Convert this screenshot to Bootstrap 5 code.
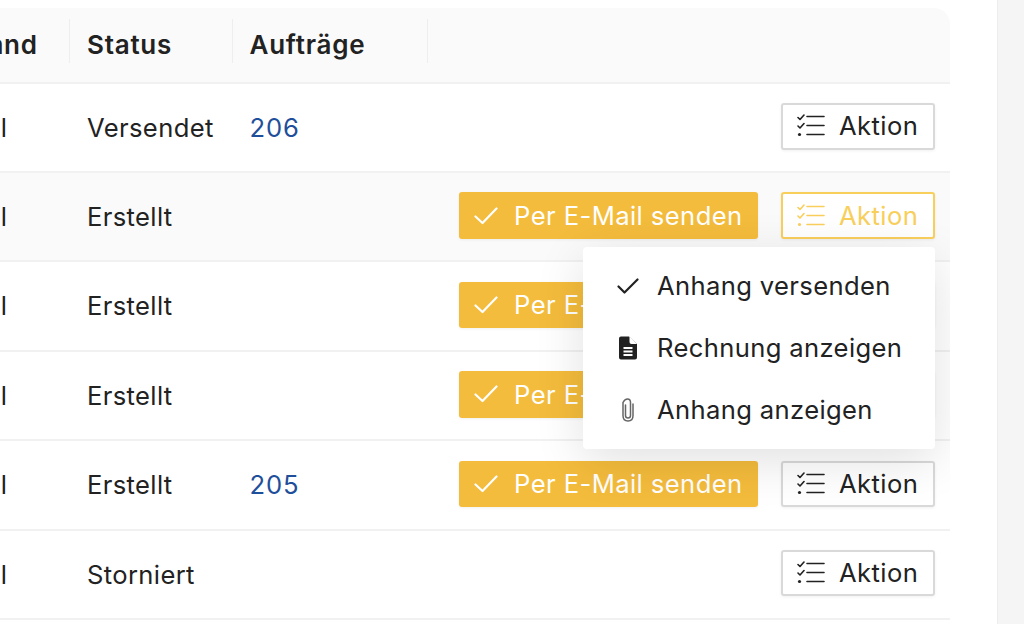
<!doctype html>
<html lang="de">
<head>
<meta charset="utf-8">
<title>Aufträge</title>
<link href="https://cdn.jsdelivr.net/npm/bootstrap@5.3.0/dist/css/bootstrap.min.css" rel="stylesheet">
<style>
html,body{height:100%;overflow:hidden;background:#fff;}
body{font-family:Inter,"Liberation Sans",sans-serif;font-size:25.6px;letter-spacing:.36px;color:#222;}
.shell{height:624px;}
.content-area{width:997px;flex:none;padding-top:8px;}
.side-area{flex:1;background:#f5f5f5;border-left:1px solid #eee;}
.table-clip{width:950px;overflow:hidden;border-top-right-radius:16px;}
.order-table{width:1050px;margin:0 0 0 -100px;table-layout:fixed;font-size:25.6px;color:#222;border-collapse:separate;border-spacing:0;}
.order-table col:nth-child(1){width:170px}
.order-table col:nth-child(2){width:163px}
.order-table col:nth-child(3){width:195px}
.order-table th{height:75.6px;padding:0 17px;background:#fafafa;font-size:26px;letter-spacing:.75px;font-weight:600;border-bottom:2px solid #f1f1f1;position:relative;color:#222;vertical-align:middle;box-shadow:none;}
.order-table th.sep::after{content:"";position:absolute;right:0;top:11px;height:44px;width:1px;background:#eee;}
.order-table th:first-child,.order-table td:first-child{padding-left:28px;white-space:nowrap;}
.order-table th:nth-child(3),.order-table td:nth-child(3){padding-left:16.5px;}
.order-table td{height:89.4px;padding:1px 17px 0;border-bottom:2px solid #f1f1f1;vertical-align:middle;background:transparent;box-shadow:none;color:#222;}
.order-table tr.hot td{background:#fafafa;}
.order-table td.acts{padding:0 15px 2px 0;}
.order-no{color:#1f4f9b;text-decoration:none;letter-spacing:.9px;}
.mail-btn,.act-btn{height:46.5px;font-size:25.6px;letter-spacing:.42px;line-height:1;border-radius:3px;display:inline-flex;align-items:center;padding:0;box-shadow:0 1px 3px rgba(0,0,0,.06);}
.mail-btn{width:299px;background:#f4bc3c;border:0;color:#fff;padding-left:15px;gap:16px;}
.mail-btn:hover{background:#f4bc3c;color:#fff;}
.act-btn{width:154px;background:#fff;border:2px solid #d9d9d9;color:#222;padding-left:14px;gap:14px;}
.act-btn.on{border-color:#f9cf5c;color:#f9cf5c;}
.act-btn svg{width:28px;height:24px;flex:none;}
.mail-btn svg{width:24px;height:18px;flex:none;}
.act-row{gap:23px;}
.act-wrap{position:relative;}
.act-menu{display:block;position:absolute;top:55px;right:0;width:352px;height:202px;margin:0;padding:8px 0;border:0;border-radius:4px;background:#fff;box-shadow:0 12px 50px rgba(0,0,0,.12);z-index:5;font-size:25.6px;letter-spacing:.36px;}
.act-menu .dropdown-item{height:62px;padding:0 0 0 34px;display:flex;align-items:center;color:#222;gap:0;}
.menu-ico{width:40px;flex:none;display:flex;align-items:center;}
</style>
</head>
<body>
<svg width="0" height="0" class="d-block position-absolute">
<defs>
<symbol id="i-list" viewBox="0 0 28 24"><g fill="none" stroke="currentColor" stroke-width="1.6" stroke-linecap="round" stroke-linejoin="round"><path d="M1 3.5 3 5.5 7 1M1 12 3 14 7 9.5"/><path d="M10 2.5H27M10 11.5H27M10 20.5H27"/></g><circle cx="2.5" cy="20.5" r="1.6" fill="currentColor"/></symbol>
<symbol id="i-check" viewBox="0 0 24 18"><path d="M1.5 9.5 8.5 16 22.5 1.5" fill="none" stroke="currentColor" stroke-width="2.2" stroke-linecap="round" stroke-linejoin="round"/></symbol>
</defs>
</svg>
<div class="d-flex shell">
<div class="content-area">
<div class="table-clip">
<table class="table order-table">
<colgroup><col><col><col><col></colgroup>
<thead><tr><th class="sep">Versand</th><th class="sep">Status</th><th class="sep">Aufträge</th><th></th></tr></thead>
<tbody>
<tr><td>E-Mail</td><td>Versendet</td><td><a class="order-no" href="#">206</a></td>
<td class="acts"><div class="d-flex justify-content-end"><button class="btn act-btn" type="button"><svg><use href="#i-list"/></svg>Aktion</button></div></td></tr>
<tr class="hot"><td>E-Mail</td><td>Erstellt</td><td></td>
<td class="acts"><div class="d-flex justify-content-end act-row act-wrap"><button class="btn mail-btn" type="button"><svg><use href="#i-check"/></svg>Per E-Mail senden</button><button class="btn act-btn on" type="button"><svg><use href="#i-list"/></svg>Aktion</button>
<ul class="dropdown-menu act-menu list-unstyled">
<li><a class="dropdown-item" href="#"><span class="menu-ico"><svg width="22" height="16" viewBox="0 0 22 16"><path d="M1.5 8.5 7.5 14.5 20.5 1.5" fill="none" stroke="#222" stroke-width="2.2" stroke-linecap="round" stroke-linejoin="round"/></svg></span>Anhang versenden</a></li>
<li><a class="dropdown-item" href="#"><span class="menu-ico"><svg width="22" height="24" viewBox="0 0 22 24"><path d="M4 0.5H12L20 8V21.5A2 2 0 0 1 18 23.5H4A2 2 0 0 1 2 21.5V2.5A2 2 0 0 1 4 0.5Z" fill="#222"/><path d="M12.5 0.5V6A2 2 0 0 0 14.5 8H20Z" fill="#fff"/><path d="M6.5 12H15.5M6.5 15.5H15.5M6.5 19H15.5" stroke="#fff" stroke-width="1.8"/></svg></span>Rechnung anzeigen</a></li>
<li><a class="dropdown-item" href="#"><span class="menu-ico"><svg width="22" height="24" viewBox="0 0 22 24"><path d="M8.5 7V17.5C8.5 19 9.6 20 11 20S13.5 19 13.5 17.5V4.5C13.5 2.5 12.2 1 10.5 1S7 2.5 6 4.5V17.5C6 21 8.2 23 11 23S16 21 16 17.5V6" fill="none" stroke="#666" stroke-width="1.5" stroke-linecap="round"/></svg></span>Anhang anzeigen</a></li>
</ul></div></td></tr>
<tr><td>E-Mail</td><td>Erstellt</td><td></td>
<td class="acts"><div class="d-flex justify-content-end act-row"><button class="btn mail-btn" type="button"><svg><use href="#i-check"/></svg>Per E-Mail senden</button><button class="btn act-btn" type="button"><svg><use href="#i-list"/></svg>Aktion</button></div></td></tr>
<tr><td>E-Mail</td><td>Erstellt</td><td></td>
<td class="acts"><div class="d-flex justify-content-end act-row"><button class="btn mail-btn" type="button"><svg><use href="#i-check"/></svg>Per E-Mail senden</button><button class="btn act-btn" type="button"><svg><use href="#i-list"/></svg>Aktion</button></div></td></tr>
<tr><td>E-Mail</td><td>Erstellt</td><td><a class="order-no" href="#">205</a></td>
<td class="acts"><div class="d-flex justify-content-end act-row"><button class="btn mail-btn" type="button"><svg><use href="#i-check"/></svg>Per E-Mail senden</button><button class="btn act-btn" type="button"><svg><use href="#i-list"/></svg>Aktion</button></div></td></tr>
<tr><td>E-Mail</td><td>Storniert</td><td></td>
<td class="acts"><div class="d-flex justify-content-end"><button class="btn act-btn" type="button"><svg><use href="#i-list"/></svg>Aktion</button></div></td></tr>
</tbody>
</table>
</div>
</div>
<div class="side-area"></div>
</div>
<script src="https://cdn.jsdelivr.net/npm/bootstrap@5.3.0/dist/js/bootstrap.bundle.min.js"></script>
</body>
</html>
